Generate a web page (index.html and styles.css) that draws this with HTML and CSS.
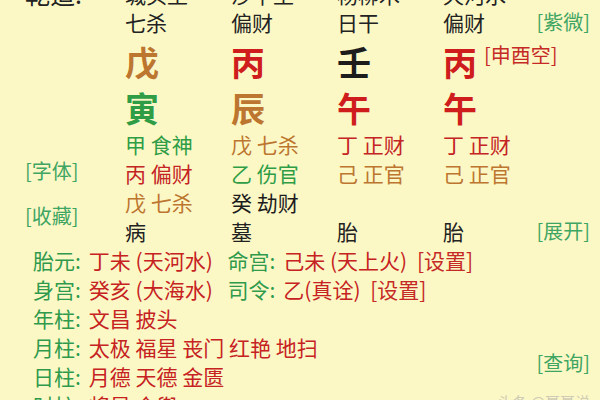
FILE: index.html
```html
<!DOCTYPE html>
<html lang="zh-CN">

<head>
    <meta charset="UTF-8">
    <meta name="viewport" content="width=device-width, initial-scale=1.0">
    <title>八字排盘</title>
    <link rel="stylesheet" href="styles.css">
</head>

<body>
    <div class="pan">
        <div class="chart">
            <div class="lado-izq">
                <div class="zao">乾造:</div>
                <div class="link link-ziti">[字体]</div>
                <div class="link link-shoucang">[收藏]</div>
            </div>

            <div class="pillars">
                <div class="cell nayin">城头土</div>
                <div class="cell nayin">沙中土</div>
                <div class="cell nayin">杨柳木</div>
                <div class="cell nayin">天河水</div>

                <div class="cell shishen">七杀</div>
                <div class="cell shishen">偏财</div>
                <div class="cell shishen">日干</div>
                <div class="cell shishen">偏财</div>

                <div class="cell gan tu">戊</div>
                <div class="cell gan huo">丙</div>
                <div class="cell gan shui">壬</div>
                <div class="cell gan huo">丙<span class="kong">[申酉空]</span></div>

                <div class="cell zhi mu">寅</div>
                <div class="cell zhi tu">辰</div>
                <div class="cell zhi huo">午</div>
                <div class="cell zhi huo">午</div>

                <div class="cell cang mu">甲 食神</div>
                <div class="cell cang tu">戊 七杀</div>
                <div class="cell cang huo">丁 正财</div>
                <div class="cell cang huo">丁 正财</div>

                <div class="cell cang huo">丙 偏财</div>
                <div class="cell cang mu">乙 伤官</div>
                <div class="cell cang tu">己 正官</div>
                <div class="cell cang tu">己 正官</div>

                <div class="cell cang tu">戊 七杀</div>
                <div class="cell cang shui">癸 劫财</div>
                <div class="cell cang"></div>
                <div class="cell cang"></div>

                <div class="cell changsheng">病</div>
                <div class="cell changsheng">墓</div>
                <div class="cell changsheng">胎</div>
                <div class="cell changsheng">胎</div>
            </div>

            <div class="lado-der">
                <div class="link link-ziwei">[紫微]</div>
                <div class="link link-zhankai">[展开]</div>
            </div>
        </div>

        <div class="info">
            <div class="filas">
                <div class="fila">
                    <span class="k">胎元:</span><span class="v">丁未 (天河水)</span>
                    <span class="k">命宫:</span><span class="v ultimo">己未 (天上火)</span>
                    <span class="set">[设置]</span>
                </div>
                <div class="fila">
                    <span class="k">身宫:</span><span class="v">癸亥 (大海水)</span>
                    <span class="k">司令:</span><span class="v ultimo">乙(真诠)</span>
                    <span class="set">[设置]</span>
                </div>
                <div class="fila">
                    <span class="k">年柱:</span><span class="v">文昌 披头</span>
                </div>
                <div class="fila">
                    <span class="k">月柱:</span><span class="v">太极 福星 丧门 红艳 地扫</span>
                </div>
                <div class="fila">
                    <span class="k">日柱:</span><span class="v">月德 天德 金匮</span>
                </div>
                <div class="fila">
                    <span class="k">时柱:</span><span class="v">将星 金舆</span>
                </div>
            </div>
            <div class="lado-der">
                <div class="link link-chaxun">[查询]</div>
                <div class="marca">头条 @聂聂说</div>
            </div>
        </div>
    </div>
</body>

</html>
```

FILE: styles.css
```css
* {
    margin: 0;
    padding: 0;
    box-sizing: border-box;
}

body {
    background-color: #fcf8c6;
    font-family: "Noto Sans CJK SC", "Noto Sans", sans-serif;
    color: #222;
    overflow: hidden;
}

.pan {
    width: 600px;
    margin-top: -20px;
}

.chart {
    display: flex;
}

.lado-izq {
    width: 125px;
    padding-left: 25px;
    display: flex;
    flex-direction: column;
}

.zao {
    font-size: 25px;
    line-height: 27px;
    height: 27px;
}

.link {
    font-size: 20px;
    line-height: 29px;
    color: #3fa563;
}

.link-ziti {
    margin-top: 149px;
}

.link-shoucang {
    margin-top: 16px;
}

.pillars {
    display: grid;
    grid-template-columns: 106px 106px 106px 90px;
    grid-template-rows: 27px 30px 48px 44px 29px 29px 29px 30px;
}

.cell {
    display: flex;
    align-items: center;
    white-space: nowrap;
    font-size: 21px;
}

.gan,
.zhi {
    font-size: 34px;
    font-weight: bold;
}

.kong {
    font-size: 20px;
    font-weight: normal;
    color: #c62a26;
    margin-left: 7px;
    margin-bottom: 14px;
}

.mu {
    color: #2f9d46;
}

.huo {
    color: #cf1c1c;
}

.tu {
    color: #bd7630;
}

.shui {
    color: #1c1c1c;
}

.cang.huo {
    color: #c42424;
}

.lado-der {
    flex: 1;
    display: flex;
    flex-direction: column;
    align-items: flex-end;
    padding-right: 10px;
}

.link-ziwei {
    margin-top: 27px;
    line-height: 30px;
}

.link-zhankai {
    margin-top: 179px;
}

.info {
    display: flex;
}

.filas {
    padding-left: 33px;
}

.fila {
    font-size: 21px;
    line-height: 29px;
    white-space: nowrap;
}

.k {
    color: #2f9a4c;
    margin-right: 8px;
}

.v {
    color: #c62222;
    margin-right: 10px;
}

.v.ultimo {
    margin-right: 5px;
}

.set {
    color: #c62a26;
}

.link-chaxun {
    margin-top: 102px;
}

.marca {
    margin-top: 14px;
    font-size: 15px;
    color: #cfcbb4;
}
```
